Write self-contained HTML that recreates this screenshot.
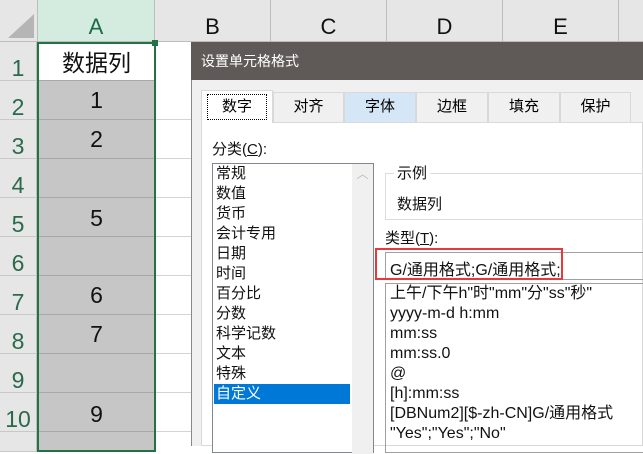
<!DOCTYPE html><html><head><meta charset="utf-8"><style>
*{margin:0;padding:0;box-sizing:border-box}
body{width:643px;height:446px;overflow:hidden;background:#fff;position:relative;font-family:"Liberation Sans","Noto Sans CJK SC",sans-serif}
.a{position:absolute}
.ch{top:0;height:42px;background:#e6e6e6;border-right:1px solid #bdbdbd;border-bottom:1px solid #bdbdbd;text-align:center;line-height:54px;font-size:22px;color:#111}
.rh{left:0;width:37px;background:#e6e6e6;border-bottom:1px solid #c8c8c8;border-right:1px solid #bdbdbd;text-align:center;font-size:23px;color:#2a6a4a;line-height:52px}
.ca{left:38px;width:117px;background:#c6c6c6;border-bottom:1px solid #a8a8a8;text-align:center;font-size:23px;color:#111}
.t{font-size:15px;color:#111;position:absolute;white-space:nowrap}
.tab{top:92px;height:30px;border:1px solid #d9d9d9;border-bottom:none;text-align:center;line-height:28px;font-size:15px;background:#f0f0f0}
</style></head><body>
<div class="a ch" style="left:0;width:38px;background:#e6e6e6"></div>
<div class="a" style="left:8px;top:14px;width:0;height:0;border-left:26px solid transparent;border-bottom:24px solid #b5b5b5"></div>
<div class="a ch" style="left:38px;width:117px;background:#d3ecdf;color:#1e6a43">A</div>
<div class="a ch" style="left:155px;width:116px">B</div>
<div class="a ch" style="left:271px;width:116px">C</div>
<div class="a ch" style="left:387px;width:116px">D</div>
<div class="a ch" style="left:503px;width:116px">E</div>
<div class="a ch" style="left:619px;width:30px"></div>
<div class="a rh" style="top:42px;height:39px">1</div>
<div class="a rh" style="top:81px;height:39px">2</div>
<div class="a rh" style="top:120px;height:39px">3</div>
<div class="a rh" style="top:159px;height:39px">4</div>
<div class="a rh" style="top:198px;height:39px">5</div>
<div class="a rh" style="top:237px;height:39px">6</div>
<div class="a rh" style="top:276px;height:39px">7</div>
<div class="a rh" style="top:315px;height:39px">8</div>
<div class="a rh" style="top:354px;height:39px">9</div>
<div class="a rh" style="top:393px;height:39px">10</div>
<div class="a rh" style="top:432px;height:20px"></div>
<div class="a ca" style="top:42px;height:39px;background:#fff;line-height:42px">数据列</div>
<div class="a ca" style="top:81px;height:39px;line-height:38px">1</div>
<div class="a ca" style="top:120px;height:39px;line-height:38px">2</div>
<div class="a ca" style="top:159px;height:39px"></div>
<div class="a ca" style="top:198px;height:39px;line-height:40px">5</div>
<div class="a ca" style="top:237px;height:39px"></div>
<div class="a ca" style="top:276px;height:39px;line-height:38px">6</div>
<div class="a ca" style="top:315px;height:39px;line-height:38px">7</div>
<div class="a ca" style="top:354px;height:39px"></div>
<div class="a ca" style="top:393px;height:39px;line-height:42px">9</div>
<div class="a ca" style="top:432px;height:20px"></div>
<div class="a" style="left:155px;top:81px;width:36px;height:365px;background:repeating-linear-gradient(#fff 0 38px,#d4d4d4 38px 39px)"></div>
<div class="a" style="left:37px;top:42px;width:119px;height:410px;border:2px solid #217346"></div>
<div class="a" style="left:152px;top:40px;width:6px;height:6px;background:#217346"></div>
<!-- dialog -->
<div class="a" style="left:191px;top:42px;width:452px;height:38px;background:#5f5a57;color:#fff;font-size:14px;line-height:38px;padding-left:10px">设置单元格格式</div>
<div class="a" style="left:191px;top:80px;width:452px;height:366px;background:#f0f0f0;border-left:1px solid #888"></div>
<div class="a" style="left:201px;top:122px;width:442px;height:324px;background:#fff;border:1px solid #d9d9d9"></div>
<div class="a tab" style="left:201px;width:72px;top:90px;height:33px;background:#fff;line-height:30px"><span style="display:inline-block;border:1px dotted #000;padding:0 14px;line-height:24px;margin-top:3px">数字</span></div>
<div class="a tab" style="left:273px;width:71px">对齐</div>
<div class="a tab" style="left:344px;width:72px;background:#d5e6f6">字体</div>
<div class="a tab" style="left:416px;width:72px">边框</div>
<div class="a tab" style="left:488px;width:72px">填充</div>
<div class="a tab" style="left:560px;width:71px">保护</div>
<div class="t" style="left:212px;top:138px">分类(<u>C</u>):</div>
<div class="a" style="left:212px;top:163px;width:162px;height:290px;border:1px solid #828790;background:#fff"></div>
<div class="a" style="left:352px;top:164px;width:21px;height:290px;background:#f0f0f0;color:#bbb;font-size:12px;text-align:center;line-height:20px">︿</div>
<div class="a" style="left:214px;top:384px;width:136px;height:20px;background:#0078d7"></div>
<div class="t" style="left:216px;top:164px;line-height:20px">常规<br>数值<br>货币<br>会计专用<br>日期<br>时间<br>百分比<br>分数<br>科学记数<br>文本<br>特殊<br><span style="color:#fff">自定义</span></div>
<div class="a" style="left:385px;top:173px;width:270px;height:47px;border:1px solid #dcdcdc"></div>
<div class="t" style="left:394px;top:162px;background:#fff;padding:0 3px">示例</div>
<div class="t" style="left:397px;top:193px">数据列</div>
<div class="t" style="left:385px;top:227px">类型(<u>T</u>):</div>
<div class="a" style="left:385px;top:252px;width:270px;height:28px;border:1px solid #a0a0a0"></div>
<div class="t" style="left:390px;top:256px;font-size:16px">G/通用格式;G/通用格式;</div>
<div class="a" style="left:375px;top:248px;width:188px;height:32px;border:2px solid #e8383b"></div>
<div class="a" style="left:385px;top:283px;width:270px;height:170px;border:1px solid #a0a0a0"></div>
<div class="t" style="left:390px;top:284px;line-height:20px;font-size:16px">上午/下午h"时"mm"分"ss"秒"<br>yyyy-m-d h:mm<br>mm:ss<br>mm:ss.0<br>@<br>[h]:mm:ss<br>[DBNum2][$-zh-CN]G/通用格式<br>"Yes";"Yes";"No"</div>
</body></html>
